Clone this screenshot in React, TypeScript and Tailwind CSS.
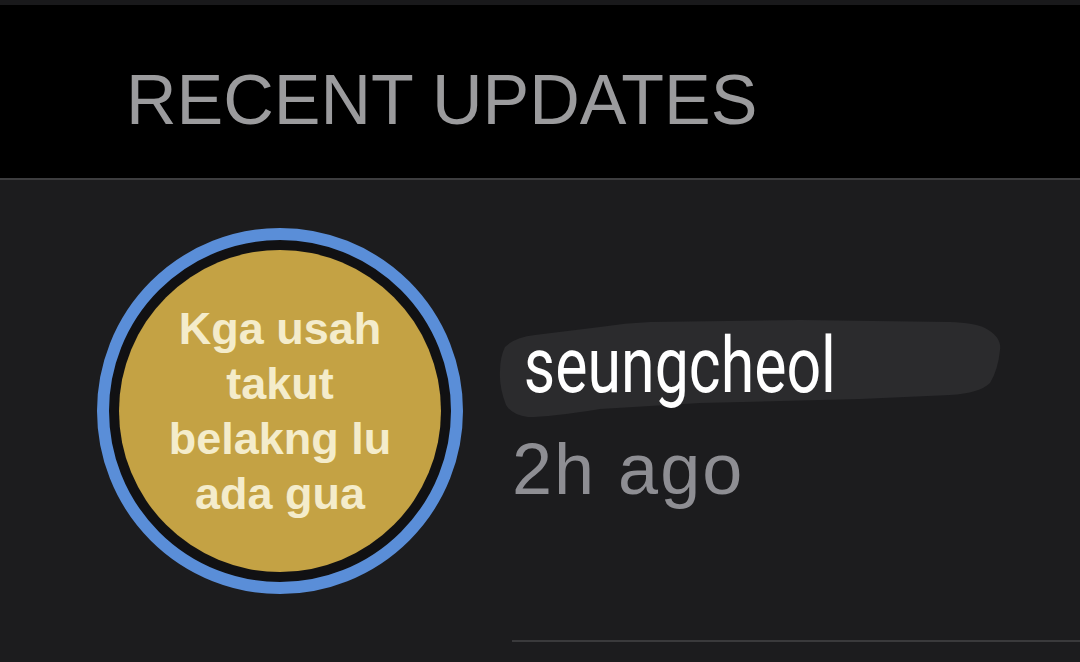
export default function App() {
  return (
    <div className="flex h-[662px] w-[1080px] flex-col overflow-hidden bg-[#1c1c1e] font-['Liberation_Sans',Arial,sans-serif]">
      <div className="h-[5px] shrink-0 bg-[#19191b]" />
      <header className="h-[173px] shrink-0 bg-black pl-[126px] pt-[60px]">
        <h2 className="text-[70px] leading-none text-[#9b9b9d]">RECENT UPDATES</h2>
      </header>
      <div className="h-[2px] shrink-0 bg-[#3d3d3f]" />

      <div className="flex flex-1 items-start">
        <StatusRing />

        <div className="ml-[49px] h-[462px] flex-1 border-b-2 border-[#3a3a3c] pt-[148px]">
          <div className="relative">
            <Scribble />
            <div className="relative origin-left scale-x-[0.79] pl-[15px] font-['Roboto',sans-serif] text-[77px] leading-none text-white">
              seungcheol
            </div>
          </div>
          <div className="mt-[28px] text-[72px] leading-none tracking-[2px] text-[#8e8e93]">2h ago</div>
        </div>
      </div>
    </div>
  )
}

function StatusRing() {
  return (
    <div className="ml-[97px] mt-[48px] h-[366px] w-[366px] shrink-0 rounded-full border-[12px] border-[#5a8ed8] bg-[#111113] p-[10px]">
      <div className="flex h-full w-full flex-col items-center justify-center rounded-full bg-[#c4a244] text-center text-[45px] font-bold leading-[55px] text-[#f4eccb]">
        <span>Kga usah</span>
        <span>takut</span>
        <span>belakng lu</span>
        <span>ada gua</span>
      </div>
    </div>
  )
}

// redaction scribble behind the username
function Scribble() {
  return (
    <svg
      className="absolute left-[-22px] top-[-13px]"
      width="540"
      height="110"
      viewBox="0 0 540 110"
      fill="none"
    >
      <path
        d="M15 32 Q25 22 45 20 L110 12 Q135 8 160 7 L310 5 L460 7 Q485 8 495 13 Q512 22 510 35 Q508 55 500 68 Q490 78 460 80 L370 84 L210 88 L110 94 Q60 102 38 102 Q22 100 16 90 Q9 72 10 56 Q10 42 15 32 Z"
        fill="#2b2b2d"
      />
    </svg>
  )
}
